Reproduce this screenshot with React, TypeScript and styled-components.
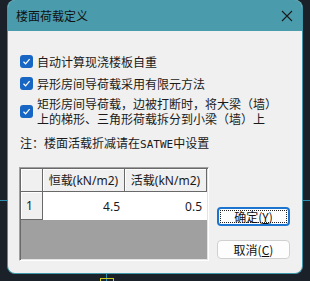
import styled, { createGlobalStyle } from "styled-components"

const GlobalStyle = createGlobalStyle`
	html, body {
		margin: 0;
		padding: 0;
		background: #1b2129;
	}
	body {
		font-family: "Noto Sans CJK SC", "Noto Sans", sans-serif;
		font-size: 12px;
		color: #1a1a1a;
	}
`

type Option = { label: string[] }
const options: Option[] = [
	{ label: ["自动计算现浇楼板自重"] },
	{ label: ["异形房间导荷载采用有限元方法"] },
	{ label: ["矩形房间导荷载，边被打断时，将大梁（墙）", "上的梯形、三角形荷载拆分到小梁（墙）上"] },
]

const CheckIcon = () => (
	<Check>
		<svg width="9" height="9" viewBox="0 0 9 9">
			<path d="M1.5 4.8 L3.6 6.8 L7.6 2.2" fill="none" stroke="#fff" strokeWidth="1.2" />
		</svg>
	</Check>
)

const CadBackdrop = () => (
	<Backdrop width="310" height="281" viewBox="0 0 310 281">
		<line x1="0" y1="200.5" x2="310" y2="200.5" stroke="#2a8fb0" strokeWidth="1" />
		<line x1="106.5" y1="270" x2="106.5" y2="281" stroke="#2a8fb0" strokeWidth="1" />
		<rect x="100.5" y="278.5" width="13" height="10" fill="none" stroke="#c8c81e" strokeWidth="1" />
	</Backdrop>
)

export default function App() {
	return (
		<>
			<GlobalStyle />
			<Canvas>
				<CadBackdrop />
				<Window>
					<TitleBar>
						<Title>楼面荷载定义</Title>
						<svg width="12" height="12" viewBox="0 0 12 12">
							<path d="M1 1 L11 11 M11 1 L1 11" stroke="#1a1a1a" strokeWidth="1.1" />
						</svg>
					</TitleBar>
					<Body>
						<Options>
							{options.map((o, i) => (
								<OptionRow key={i} $tall={o.label.length > 1}>
									<CheckIcon />
									<OptionText>
										{o.label.map((l) => (
											<div key={l}>{l}</div>
										))}
									</OptionText>
								</OptionRow>
							))}
						</Options>
						<Note>
							注：楼面活载折减请在<Mono>SATWE</Mono>中设置
						</Note>
						<Bottom>
							<Grid>
								<HeaderRow>
									<Corner />
									<HeadCell>恒载(kN/m2)</HeadCell>
									<HeadCell>活载(kN/m2)</HeadCell>
								</HeaderRow>
								<DataRow>
									<RowHead>1</RowHead>
									<Cell>4.5</Cell>
									<Cell>0.5</Cell>
								</DataRow>
								<Empty />
							</Grid>
							<Buttons>
								<Button $focused>
									<FocusRing>确定(<u>Y</u>)</FocusRing>
								</Button>
								<Button>
									取消(<u>C</u>)
								</Button>
							</Buttons>
						</Bottom>
					</Body>
				</Window>
			</Canvas>
		</>
	)
}

const Canvas = styled.div`
	position: relative;
	width: 310px;
	height: 281px;
	overflow: hidden;
`

const Backdrop = styled.svg`
	position: absolute;
	left: 0;
	top: 0;
`

const Window = styled.div`
	position: relative;
	margin-left: 7px;
	width: 296px;
	height: 274px;
	box-sizing: border-box;
	border: 1px solid #3f97aa;
	border-top: none;
	border-radius: 8px;
	overflow: hidden;
	background: #f0f0f0;
	display: flex;
	flex-direction: column;
`

const TitleBar = styled.div`
	height: 31px;
	flex: none;
	background: #4a9cac;
	display: flex;
	align-items: center;
	justify-content: space-between;
	padding: 0 9px 0 8px;
`

const Title = styled.div`
	font-size: 12px;
	color: #111;
`

const Body = styled.div`
	flex: 1;
	padding: 19px 12px 0 12px;
	display: flex;
	flex-direction: column;
`

const Options = styled.div`
	display: flex;
	flex-direction: column;
`

const OptionRow = styled.div<{ $tall?: boolean }>`
	display: flex;
	align-items: center;
	gap: 4px;
	height: ${(p) => (p.$tall ? "30px" : "22px")};
	margin-top: ${(p) => (p.$tall ? "2px" : "0")};
`

const Check = styled.div`
	width: 13px;
	height: 13px;
	flex: none;
	border-radius: 3px;
	background: #1866c4;
	display: flex;
	align-items: center;
	justify-content: center;
`

const OptionText = styled.div`
	line-height: 15px;
	white-space: nowrap;
`

const Note = styled.div`
	margin-top: 9px;
	height: 16px;
	line-height: 16px;
	white-space: nowrap;
`

const Mono = styled.span`
	font-family: "DejaVu Sans Mono", monospace;
	font-size: 11px;
`

const Bottom = styled.div`
	margin-top: 16px;
	display: flex;
	align-items: flex-end;
	gap: 8px;
`

const Grid = styled.div`
	margin-left: -1px;
	width: 191px;
	height: 94px;
	box-sizing: border-box;
	border-top: 1px solid #a0a0a0;
	border-left: 1px solid #a0a0a0;
	border-right: 1px solid #ffffff;
	border-bottom: 1px solid #ffffff;
	box-shadow: inset 1px 1px 0 #696969, inset -1px -1px 0 #e3e3e3;
	padding: 1px;
	display: flex;
	flex-direction: column;
	font-family: "Noto Sans", "Noto Sans CJK SC", sans-serif;
`

const HeaderRow = styled.div`
	display: flex;
	height: 23px;
	flex: none;
`

const headBase = `
	box-sizing: border-box;
	background: #f0f0f0;
	border-right: 1px solid #696969;
	border-bottom: 1px solid #696969;
	box-shadow: inset 1px 1px 0 #ffffff;
`

const Corner = styled.div`
	${headBase}
	width: 22px;
`

const HeadCell = styled.div`
	${headBase}
	flex: 1;
	display: flex;
	align-items: center;
	justify-content: center;
	font-size: 12px;
	white-space: nowrap;
`

const DataRow = styled.div`
	display: flex;
	height: 28px;
	flex: none;
`

const RowHead = styled.div`
	${headBase}
	width: 22px;
	display: flex;
	align-items: center;
	padding-left: 5px;
`

const Cell = styled.div`
	flex: 1;
	background: #fff;
	display: flex;
	align-items: center;
	justify-content: flex-end;
	padding-right: 5px;
	font-size: 12px;
`

const Empty = styled.div`
	flex: 1;
	background: #a0a0a0;
`

const Buttons = styled.div`
	display: flex;
	flex-direction: column;
	gap: 14px;
	margin-bottom: 2px;
`

const Button = styled.div<{ $focused?: boolean }>`
	width: 73px;
	height: 19px;
	box-sizing: border-box;
	border-radius: 4px;
	background: #fdfdfd;
	border: ${(p) => (p.$focused ? "2px solid #1a74d0" : "1px solid #d0d0d0")};
	display: flex;
	align-items: center;
	justify-content: center;
	font-size: 12px;
	color: #111;
	padding: 1px;
	u {
		text-underline-offset: 1px;
	}
`

const FocusRing = styled.div`
	width: 100%;
	height: 100%;
	box-sizing: border-box;
	border: 1px dotted #222;
	display: flex;
	align-items: center;
	justify-content: center;
`
